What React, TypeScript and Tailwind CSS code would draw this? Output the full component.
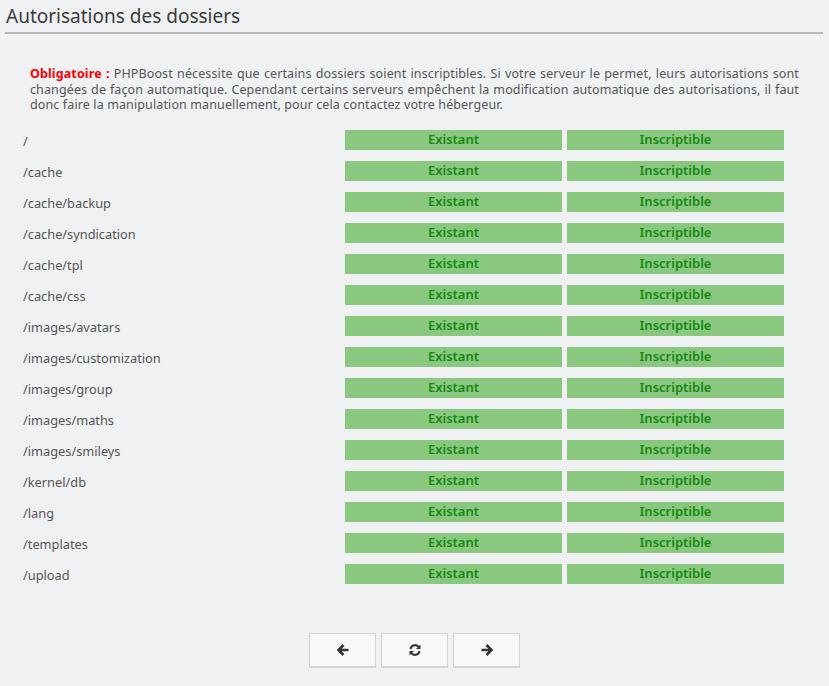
const folders = [
  "/",
  "/cache",
  "/cache/backup",
  "/cache/syndication",
  "/cache/tpl",
  "/cache/css",
  "/images/avatars",
  "/images/customization",
  "/images/group",
  "/images/maths",
  "/images/smileys",
  "/kernel/db",
  "/lang",
  "/templates",
  "/upload",
];

export default function App() {
  return (
    <main className="min-h-screen w-[829px] h-[686px] bg-[#f0f1f3] font-['Noto_Sans',sans-serif] text-[#555]">
      {/* Title */}
      <header className="pl-[6px] pt-[1px]">
        <h1 className="text-[19px] leading-[30px] text-[#3a3a3a]">Autorisations des dossiers</h1>
      </header>
      <div className="ml-[5px] mr-[6px] mt-[1px] h-[2px] bg-[#b8b8b8]" />

      {/* Explanation */}
      <p className="ml-[30px] mr-[30px] mt-[32px] text-[12.5px] tracking-[0.12px] leading-[15.5px] text-justify">
        <span className="font-bold text-[#ff0000]">Obligatoire :</span> PHPBoost nécessite que certains dossiers
        soient inscriptibles. Si votre serveur le permet, leurs autorisations sont changées de façon automatique.
        Cependant certains serveurs empêchent la modification automatique des autorisations, il faut donc faire la
        manipulation manuellement, pour cela contactez votre hébergeur.
      </p>

      {/* Folder list */}
      <div className="mt-[17px] ml-[23px] flex flex-col gap-[11px]">
        {folders.map((f) => (
          <div key={f} className="flex items-center h-[20px]">
            <span className="w-[322px] text-[12.8px] pt-[4px]">{f}</span>
            <div className="w-[217px] h-[20px] bg-[#8bc87f] flex items-center justify-center text-[13px] font-semibold text-[#138813]">
              Existant
            </div>
            <div className="ml-[5px] w-[217px] h-[20px] bg-[#8bc87f] flex items-center justify-center text-[13px] font-semibold text-[#138813]">
              Inscriptible
            </div>
          </div>
        ))}
      </div>

      {/* Navigation */}
      <div className="mt-[49px] flex justify-center gap-[5px]">
        <button className="w-[67px] h-[35px] bg-[#f8f8f8] border border-[#d4d4d4] border-b-2 flex items-center justify-center text-[#333]">
          <svg width="14" height="14" viewBox="0 0 14 14">
            <path d="M7.5 2 L2.5 7 L7.5 12 M3 7 H12.5" stroke="currentColor" strokeWidth="2.6" fill="none" strokeLinejoin="miter" />
          </svg>
        </button>
        <button className="w-[67px] h-[35px] bg-[#f8f8f8] border border-[#d4d4d4] border-b-2 flex items-center justify-center text-[#333]">
          <svg width="14" height="14" viewBox="0 0 14 14">
            <path d="M2.5 6 A4.7 4.7 0 0 1 11 4.2" stroke="currentColor" strokeWidth="2" fill="none" />
            <path d="M12.5 1.5 V6 H8 Z" fill="currentColor" />
            <path d="M11.5 8 A4.7 4.7 0 0 1 3 9.8" stroke="currentColor" strokeWidth="2" fill="none" />
            <path d="M1.5 12.5 V8 H6 Z" fill="currentColor" />
          </svg>
        </button>
        <button className="w-[67px] h-[35px] bg-[#f8f8f8] border border-[#d4d4d4] border-b-2 flex items-center justify-center text-[#333]">
          <svg width="14" height="14" viewBox="0 0 14 14">
            <path d="M6.5 2 L11.5 7 L6.5 12 M11 7 H1.5" stroke="currentColor" strokeWidth="2.6" fill="none" strokeLinejoin="miter" />
          </svg>
        </button>
      </div>
    </main>
  );
}
